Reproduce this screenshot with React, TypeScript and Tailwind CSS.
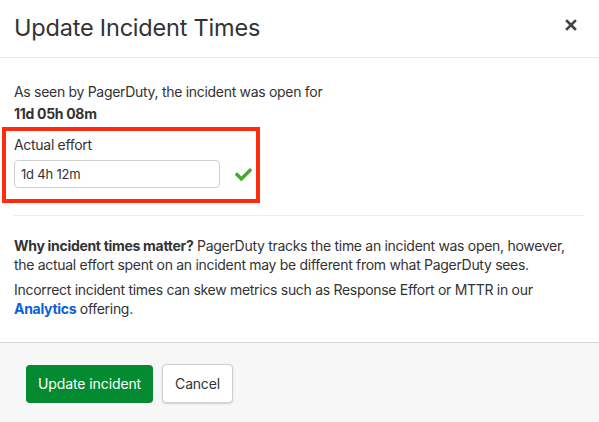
import React, { FC, useState } from "react";

const CheckIcon: FC = () => (
  <svg width="17" height="13" viewBox="0 0 512 390" fill="#3fae2a">
    <path d="M173.9 382.4L7.5 216c-10-10-10-26.2 0-36.2l36.2-36.2c10-10 26.2-10 36.2 0L192 255.7 432.1 15.6c10-10 26.2-10 36.2 0l36.2 36.2c10 10 10 26.2 0 36.2L210.1 382.4c-10 10-26.2 10-36.2 0z" />
  </svg>
);

const CloseIcon: FC = () => (
  <svg width="12" height="12" viewBox="0 0 12 12" stroke="#444" strokeWidth="2.6" strokeLinecap="square">
    <path d="M2 2L10 10M10 2L2 10" />
  </svg>
);

const App: FC = () => {
  const [effort, setEffort] = useState<string>("1d 4h 12m");

  return (
    <div className="w-[599px] h-[422px] bg-white flex flex-col text-[#333] font-['Inter',sans-serif] overflow-hidden">
      {/* header */}
      <div className="h-[58px] flex items-center justify-between pl-[14px] pr-[22px] border-b border-[#e6e6e6]">
        <h2 className="text-[23.5px] font-normal tracking-[-0.2px] mt-[-1px]">Update Incident Times</h2>
        <button className="mt-[-8px]">
          <CloseIcon />
        </button>
      </div>

      {/* body */}
      <div className="flex-1 px-[14px] pt-[24px] text-[14px] tracking-[-0.3px]">
        <p className="leading-[20px]">As seen by PagerDuty, the incident was open for</p>
        <p className="leading-[20px] mt-[2px] font-bold">11d 05h 08m</p>

        <div className="mt-[3px] -ml-[12px] w-[258px] h-[76px] border-[4px] border-[#ff2b0e] pl-[8px] pt-[4px]">
          <label className="block leading-[20px]" htmlFor="effort">
            Actual effort
          </label>
          <div className="mt-[5px] flex items-center">
            <input
              id="effort"
              type="text"
              value={effort}
              onChange={(e) => setEffort(e.target.value)}
              className="w-[206px] h-[28px] px-[6px] text-[13px] tracking-[-0.2px] border border-[#cfcfcf] rounded-[4px] focus:outline-none"
            />
            <span className="ml-[15px] mt-[1px]">
              <CheckIcon />
            </span>
          </div>
        </div>

        <div className="mt-[12px] border-t border-[#ececec] w-[570px]" />

        <p className="mt-[20px] leading-[19px]">
          <span className="font-bold">Why incident times matter?</span> PagerDuty tracks the time an
          incident was open, however, the actual effort spent on an incident may be different from what
          PagerDuty sees.
        </p>
        <p className="mt-[6px] leading-[19px]">
          Incorrect incident times can skew metrics such as Response Effort or MTTR in our{" "}
          <a className="font-bold text-[#0b5fd6]" href="#">
            Analytics
          </a>{" "}
          offering.
        </p>
      </div>

      {/* footer */}
      <div className="h-[80px] bg-[#f7f7f7] border-t border-[#d6d6d6] flex items-center gap-[9px] pl-[26px] pt-[2px]">
        <button className="h-[38px] px-[12px] rounded-[4px] bg-[#048a31] text-white text-[14px] tracking-[-0.1px]">
          Update incident
        </button>
        <button className="h-[39px] px-[12px] rounded-[4px] bg-white border border-[#cfcfcf] shadow-[0_1px_2px_rgba(0,0,0,0.15)] text-[14px] tracking-[-0.2px] text-[#333]">
          Cancel
        </button>
      </div>
    </div>
  );
};

export default App;
